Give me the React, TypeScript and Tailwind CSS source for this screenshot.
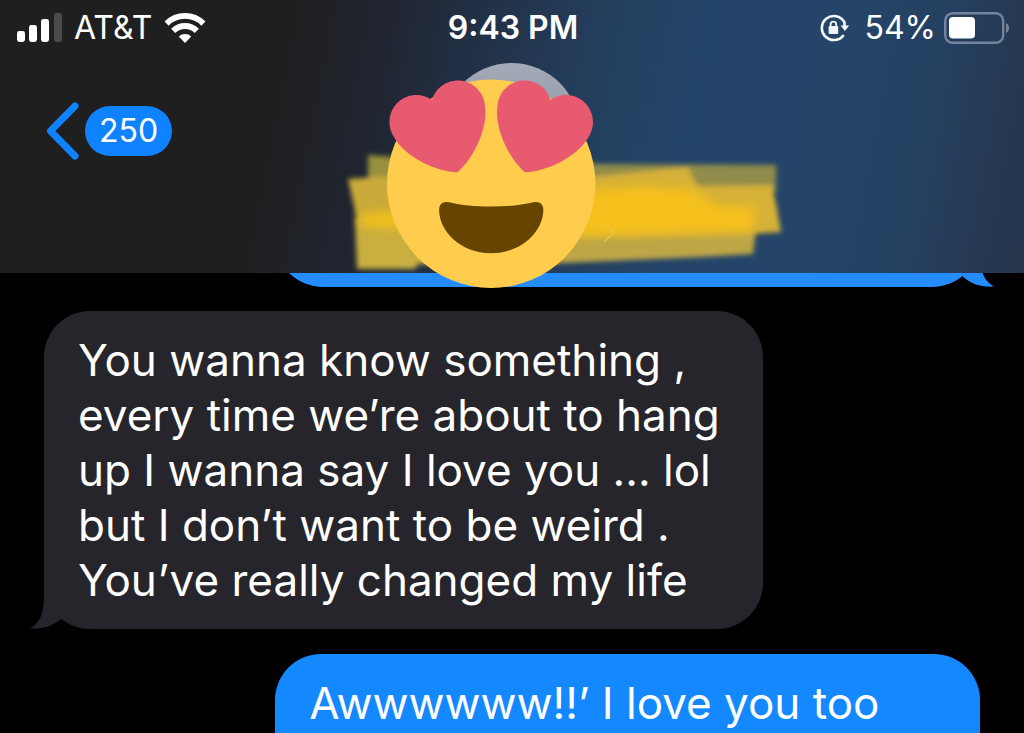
import type { ReactNode } from "react";

type Side = "received" | "sent";

function SignalIcon() {
  return (
    <svg width="46" height="30" viewBox="0 0 46 30" aria-hidden="true">
      <rect x="1" y="18" width="8" height="11" rx="2.4" fill="#fff" />
      <rect x="13" y="12" width="8" height="17" rx="2.4" fill="#fff" />
      <rect x="25" y="6" width="8" height="23" rx="2.4" fill="#fff" />
      <rect x="38" y="0" width="8" height="29" rx="2.4" fill="#4b4b4c" />
    </svg>
  );
}

function WifiIcon() {
  return (
    <svg width="42" height="30" viewBox="0 0 42 30" aria-hidden="true">
      <g fill="none" stroke="#fff" strokeWidth="5.8">
        <path d="M2.6 10.600a26 26 0 0 1 36.800 0" />
        <path d="M9.200 17.900a16.600 16.600 0 0 1 23.600 0" />
      </g>
      <path d="M14.800 23.400a9 9 0 0 1 12.400 0L21 30z" fill="#fff" />
    </svg>
  );
}

function RotationLockIcon() {
  return (
    <svg width="30" height="28" viewBox="0 0 30 28" aria-hidden="true">
      <path d="M24.3 8.1a12 12 0 1 0 -.6 12.8" fill="none" stroke="#f2f6fb" strokeWidth="2.6" />
      <path d="M20.6 11.6h8.600l-4.300 5.400z" fill="#f2f6fb" />
      <path d="M24.5 7.5v6" stroke="#f2f6fb" strokeWidth="2.6" />
      <rect x="8.6" y="12" width="9.6" height="8" rx="1.2" fill="#f2f6fb" />
      <path d="M10.600 12.600v-2.200a2.800 2.800 0 0 1 5.600 0V12.600" fill="none" stroke="#f2f6fb" strokeWidth="1.8" />
    </svg>
  );
}

function BatteryIcon() {
  return (
    <svg width="66" height="32" viewBox="0 0 66 32" aria-hidden="true">
      <rect x="1.2" y="1.2" width="58" height="29.6" rx="7.5" fill="none" stroke="#75849b" strokeWidth="2.4" />
      <rect x="5" y="5" width="26" height="21.5" rx="4" fill="#fff" />
      <path d="M62 11c4 1.500 4 8.500 0 10z" fill="#75849b" />
    </svg>
  );
}

function StatusBar() {
  return (
    <div className="grid grid-cols-3 items-center pt-2 pr-3.5 pl-4 text-[32px] leading-10 text-white">
      <div className="flex items-center gap-3">
        <SignalIcon />
        <span>AT&amp;T</span>
        <WifiIcon />
      </div>
      <time className="text-center font-semibold">9:43 PM</time>
      <div className="flex items-center justify-end gap-2">
        <span className="mr-1.5">
          <RotationLockIcon />
        </span>
        <span>54%</span>
        <BatteryIcon />
      </div>
    </div>
  );
}

function Sticker() {
  return (
    <svg
      className="pointer-events-none absolute top-[60px] left-1/2 z-10 -ml-[172px]"
      width="450"
      height="232"
      viewBox="340 60 450 232"
      role="img"
      aria-label="Smiling face with heart eyes"
    >
      <defs>
        <filter id="soft" x="-10%" y="-20%" width="120%" height="140%">
          <feGaussianBlur stdDeviation="2.800" />
        </filter>
        <filter id="softer" x="-10%" y="-30%" width="120%" height="160%">
          <feGaussianBlur stdDeviation="5" />
        </filter>
      </defs>
      <g filter="url(#soft)">
        <path d="M368 155L420 159L430 185L368 182z" fill="#98903e" />
        <path d="M580 164L776 165L776 192L580 200z" fill="#918c4b" />
        <path d="M348 179L420 174L420 226L358 224z" fill="#c9aa3a" />
        <path d="M355 218L440 214L470 264L418 264L415 269L357 269z" fill="#c9ae3f" />
        <path d="M570 220L757 220L753 254L700 257L540 264z" fill="#bea646" />
        <path d="M580 178L688 167L697 186L772 185L777 209L781 232L750 234L570 238z" fill="#d6b139" />
      </g>
      <g fill="#f5c01b" filter="url(#softer)">
        <path d="M358 215L420 207L420 230L362 227z" opacity="0.9" />
        <path d="M580 190L640 187L692 189L716 205L755 207L752 231L580 236z" />
      </g>
      <path d="M605 224l9 9l-10 9" fill="none" stroke="#e6cb5c" strokeWidth="1.5" opacity="0.6" />
      <g transform="translate(387 79.500) scale(5.790)">
        <circle cx="18" cy="18" r="18" fill="#ffcc4d" />
        <path
          fill="#e75a70"
          d="M16.650 3.281C15.791.85 13.126-.426 10.694.431c-1.476.52-2.521 1.711-2.928 3.104-1.191-.829-2.751-1.100-4.225-.58C1.111 3.813-.167 6.480.692 8.911c.122.344.284.663.472.958 1.951 3.582 7.588 6.100 11.001 6.131 2.637-2.167 5.446-7.665 4.718-11.677-.038-.348-.113-.698-.233-1.042zm2.700 0C20.209.85 22.875-.426 25.306.431c1.476.52 2.521 1.711 2.929 3.104 1.191-.829 2.751-1.100 4.225-.58 2.430.858 3.707 3.525 2.850 5.956-.123.344-.284.663-.473.958-1.951 3.582-7.588 6.100-11.002 6.131-2.637-2.167-5.445-7.665-4.717-11.677.037-.348.112-.698.232-1.042z"
        />
        <path
          fill="#664500"
          d="M18 21.950c-2.800 0-5.200-.25-7.300-.75C9.700 20.950 9 21.500 9 22.500c0 3.700 3.700 7.500 9 7.500s9-3.800 9-7.500c0-1-.7-1.550-1.700-1.300-2.100.5-4.500.75-7.300.75z"
        />
      </g>
    </svg>
  );
}

function Header() {
  return (
    <header className="relative h-[273px] bg-[linear-gradient(101deg,#1f1f20_0%,#1f1f20_27%,#20242f_36%,#222f44_44%,#233d5a_55%,#24456a_66%,#244568_80%,#243f60_89%,#253a54_94%,#24344b_100%)]">
      <StatusBar />
      <div className="grid grid-cols-3 items-start pt-[15px]">
        <button type="button" aria-label="Back, 250 unread" className="mt-[38px] ml-[45px] flex items-center gap-1.5 justify-self-start">
          <svg width="34" height="60" viewBox="0 0 34 60" aria-hidden="true">
            <path d="M30 5L5.500 30L30 55" fill="none" stroke="#0f83ff" strokeWidth="7" strokeLinecap="round" strokeLinejoin="round" />
          </svg>
          <span className="rounded-full bg-[#0f83ff] px-3.5 py-[5px] text-[32px] leading-10 text-white">250</span>
        </button>
        <div className="size-[137px] justify-self-center rounded-full bg-linear-to-b from-[#a4a9b7] to-[#858a97]" />
      </div>
      <Sticker />
    </header>
  );
}

function Tail({ side }: { side: Side }) {
  const received = side === "received";
  return (
    <svg
      className={received ? "absolute bottom-0 -left-[14px]" : "absolute -right-[14px] bottom-0 -scale-x-100"}
      width="32"
      height="46"
      viewBox="0 0 32 46"
      aria-hidden="true"
    >
      <path d="M14 0C14.500 26 13 38 0 45.500C12 46.500 23 43 31 35.700V0z" fill={received ? "#26252b" : "#248cff"} />
    </svg>
  );
}

function Conversation({ children }: { children: ReactNode }) {
  return <section className="flex min-h-0 flex-1 flex-col overflow-hidden pr-11 pl-11 text-[44px] leading-[55px] text-white">{children}</section>;
}

export default function App() {
  return (
    <main className="flex h-screen flex-col overflow-hidden bg-black font-['Inter',sans-serif]">
      <Header />
      <Conversation>
        <div className="relative -mt-[82px] h-24 w-[75.3%] shrink-0 self-end rounded-[48px] bg-[#248cff]">
          <Tail side="sent" />
        </div>
        <div className="relative mt-6 w-[76.8%] shrink-0 rounded-[46px] bg-[#26252b] pt-[22px] pb-[21px] pl-[34px]">
          <Tail side="received" />
          <p>
            You wanna know something ,<br />
            every time we’re about to hang<br />
            up I wanna say I love you ... lol<br />
            but I don’t want to be weird .<br />
            You’ve really changed my life
          </p>
        </div>
        <div className="mt-[25px] w-[75.3%] shrink-0 self-end rounded-t-[46px] bg-[#1488ff] px-[34px] pt-[22px] pb-16">
          <p>Awwwwww!!’ I love you too</p>
        </div>
      </Conversation>
    </main>
  );
}
